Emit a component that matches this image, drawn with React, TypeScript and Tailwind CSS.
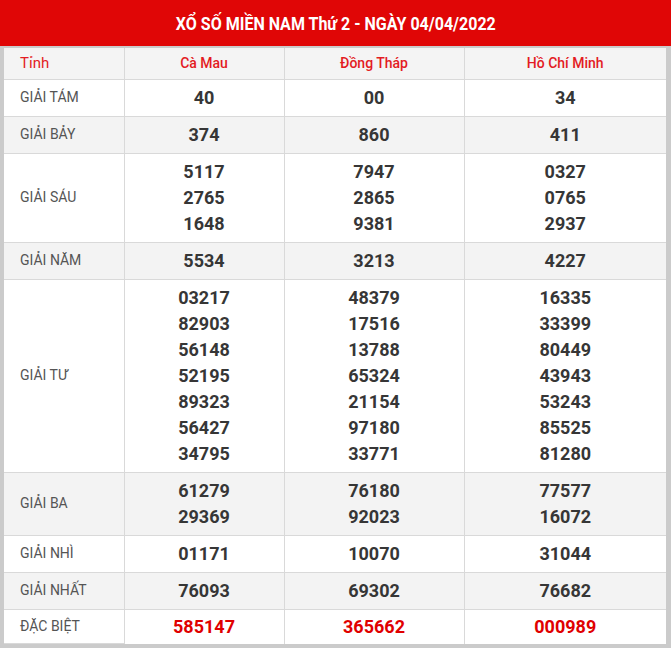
import React from "react";

type Row = {
  label: string;
  values: string[][];
  special?: boolean;
};

const provinces = ["Cà Mau", "Đồng Tháp", "Hồ Chí Minh"];

const rows: Row[] = [
  { label: "GIẢI TÁM", values: [["40"], ["00"], ["34"]] },
  { label: "GIẢI BẢY", values: [["374"], ["860"], ["411"]] },
  {
    label: "GIẢI SÁU",
    values: [
      ["5117", "2765", "1648"],
      ["7947", "2865", "9381"],
      ["0327", "0765", "2937"],
    ],
  },
  { label: "GIẢI NĂM", values: [["5534"], ["3213"], ["4227"]] },
  {
    label: "GIẢI TƯ",
    values: [
      ["03217", "82903", "56148", "52195", "89323", "56427", "34795"],
      ["48379", "17516", "13788", "65324", "21154", "97180", "33771"],
      ["16335", "33399", "80449", "43943", "53243", "85525", "81280"],
    ],
  },
  {
    label: "GIẢI BA",
    values: [
      ["61279", "29369"],
      ["76180", "92023"],
      ["77577", "16072"],
    ],
  },
  { label: "GIẢI NHÌ", values: [["01171"], ["10070"], ["31044"]] },
  { label: "GIẢI NHẤT", values: [["76093"], ["69302"], ["76682"]] },
  { label: "ĐẶC BIỆT", values: [["585147"], ["365662"], ["000989"]], special: true },
];

export default function App() {
  return (
    <div className="w-[671px] h-[648px] overflow-hidden bg-white font-['Roboto',sans-serif]">
      <div className="h-[46px] bg-[#e00606] flex items-center justify-center">
        <span className="inline-block text-white font-bold text-[18px] scale-x-[0.89] whitespace-nowrap">
          XỔ SỐ MIỀN NAM Thứ 2 - NGÀY 04/04/2022
        </span>
      </div>
      <div className="border-l-[4px] border-r-[5px] border-b-[5px] border-t-[2px] border-[#cbcbcb]">
        <table className="w-full border-collapse table-fixed">
          <colgroup>
            <col className="w-[120px]" />
            <col className="w-[160px]" />
            <col className="w-[180px]" />
            <col />
          </colgroup>
          <thead>
            <tr className="bg-[#f4f4f4] h-[31px]">
              <th className="text-left pl-4 font-normal text-[15px] text-[#e31b23] border-b border-[#d9d9d9]">
                Tỉnh
              </th>
              {provinces.map((p) => (
                <th
                  key={p}
                  className="text-center font-medium text-[14px] text-[#e31b23] border-b border-l border-[#d9d9d9]"
                >
                  {p}
                </th>
              ))}
            </tr>
          </thead>
          <tbody>
            {rows.map((row, i) => (
              <tr key={row.label} className={i % 2 === 1 ? "bg-[#f3f3f3]" : "bg-white"}>
                <td className="pl-4 text-[14px] text-[#555] border-b border-[#d9d9d9] align-middle">
                  {row.label}
                </td>
                {row.values.map((vals, j) => (
                  <td
                    key={j}
                    className={
                      "text-center border-l border-[#d9d9d9] font-bold text-[18px] leading-[26px] " +
                      (row.special ? "text-[#e00000] pt-[4px] pb-[4px]" : "text-[#363636] py-[5px] border-b")
                    }
                  >
                    {vals.map((v) => (
                      <div key={v}>{v}</div>
                    ))}
                  </td>
                ))}
              </tr>
            ))}
          </tbody>
        </table>
      </div>
    </div>
  );
}
